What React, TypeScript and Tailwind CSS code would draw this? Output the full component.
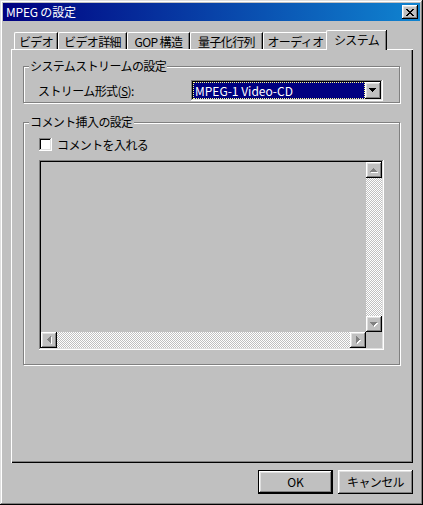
import React from "react";

const raised =
  "shadow-[inset_-1px_-1px_#000,inset_1px_1px_#fff,inset_-2px_-2px_#808080,inset_2px_2px_#dfdfdf]";
const sunken =
  "shadow-[inset_-1px_-1px_#fff,inset_1px_1px_#808080,inset_-2px_-2px_#dfdfdf,inset_2px_2px_#000]";
const checker =
  "bg-[repeating-conic-gradient(#c0c0c0_0%_25%,#ffffff_0%_50%)] bg-[length:2px_2px]";

type Dir = "up" | "down" | "left" | "right";

function tri(dir: Dir): [number, number][] {
  const pts: [number, number][] = [];
  for (let r = 0; r < 4; r++) {
    for (let c = 3 - r; c <= 3 + r; c++) {
      if (dir === "up") pts.push([c, r]);
      if (dir === "down") pts.push([c, 3 - r]);
      if (dir === "left") pts.push([r, c]);
      if (dir === "right") pts.push([3 - r, c]);
    }
  }
  return pts;
}

function Arrow({ dir, disabled }: { dir: Dir; disabled?: boolean }) {
  const horiz = dir === "up" || dir === "down";
  const w = horiz ? 7 : 4;
  const h = horiz ? 4 : 7;
  const pts = tri(dir);
  return (
    <svg width={w + 1} height={h + 1} viewBox={`0 0 ${w + 1} ${h + 1}`} shapeRendering="crispEdges">
      {disabled &&
        pts.map(([x, y], i) => (
          <rect key={"w" + i} x={x + 1} y={y + 1} width={1} height={1} fill="#ffffff" />
        ))}
      {pts.map(([x, y], i) => (
        <rect key={"b" + i} x={x} y={y} width={1} height={1} fill={disabled ? "#808080" : "#000000"} />
      ))}
    </svg>
  );
}

function ScrollBtn({ dir }: { dir: Dir }) {
  return (
    <div className={`w-[16px] h-[16px] shrink-0 bg-[#c0c0c0] flex items-center justify-center ${raised}`}>
      <Arrow dir={dir} disabled />
    </div>
  );
}

function Tab({ label, w, selected }: { label: string; w: string; selected?: boolean }) {
  if (selected) {
    return (
      <div
        className={`${w} h-[20px] -ml-[2px] bg-[#c0c0c0] border-l border-t border-white rounded-tl-[2px] relative z-10 shadow-[inset_-1px_0_#808080,1px_0_#000] flex items-start justify-center pt-[3px] leading-[12px]`}
      >
        {label}
      </div>
    );
  }
  return (
    <div
      className={`${w} h-[17px] mb-[1px] bg-[#c0c0c0] border-l border-t border-white rounded-tl-[2px] shadow-[inset_-1px_0_#808080,inset_-2px_0_#c0c0c0] border-r border-r-black flex items-start justify-center pt-[3px] leading-[12px] whitespace-nowrap`}
    >
      {label}
    </div>
  );
}

function Group({ title, className, children }: { title: string; className?: string; children: React.ReactNode }) {
  return (
    <div
      className={`relative border border-[#808080] shadow-[inset_1px_1px_#fff,1px_1px_#fff] ${className ?? ""}`}
    >
      <span className="absolute left-[5px] -top-[7px] px-[1px] bg-[#c0c0c0] leading-[12px]">{title}</span>
      {children}
    </div>
  );
}

export default function App() {
  return (
    <div
      className={`w-[423px] h-[505px] bg-[#c0c0c0] p-[3px] flex flex-col text-[12px] tracking-[-0.6px] text-black font-['Noto_Sans_CJK_JP','Noto_Sans',sans-serif] shadow-[inset_-1px_-1px_#000,inset_1px_1px_#dfdfdf,inset_-2px_-2px_#808080,inset_2px_2px_#fff]`}
    >
      {/* Title bar */}
      <div className="h-[18px] shrink-0 flex items-center justify-between bg-[linear-gradient(to_right,#000080,#1084d0)] pl-[3px] pr-[2px]">
        <span className="text-white leading-[12px] tracking-[-0.2px]">MPEG の設定</span>
        <div className={`w-[16px] h-[14px] bg-[#c0c0c0] flex items-center justify-center ${raised}`}>
          <svg width="8" height="7" viewBox="0 0 8 7" shapeRendering="crispEdges">
            {[0, 1, 2, 3, 4, 5, 6].map((i) => (
              <React.Fragment key={i}>
                <rect x={i} y={i} width={2} height={1} fill="#000" />
                <rect x={6 - i} y={i} width={2} height={1} fill="#000" />
              </React.Fragment>
            ))}
          </svg>
        </div>
      </div>

      {/* Body */}
      <div className="flex-1 flex flex-col pl-[8px] pr-[7px] pt-[9px]">
        {/* Tabs */}
        <div className="h-[20px] -mb-[1px] flex items-end pl-[3px] relative z-10">
          <Tab label="ビデオ" w="w-[44px]" />
          <Tab label="ビデオ詳細" w="w-[69px]" />
          <Tab label="GOP 構造" w="w-[63px]" />
          <Tab label="量子化行列" w="w-[73px]" />
          <Tab label="オーディオ" w="w-[65px]" />
          <Tab label="システム" w="w-[60px]" selected />
        </div>

        {/* Panel */}
        <div className="h-[414px] shrink-0 pt-[17px] pl-[12px] pr-[13px] shadow-[inset_1px_1px_#fff,inset_-1px_-1px_#000,inset_-2px_-2px_#808080]">
          <Group title="システムストリームの設定" className="pt-[13px] pb-[1px] pl-[14px] pr-[16px]">
            <div className="flex items-center justify-between">
              <span className="leading-[12px]">
                ストリーム形式(<span className="underline">S</span>):
              </span>
              <div className={`w-[192px] h-[21px] bg-white p-[2px] flex ${sunken}`}>
                <div className="flex-1 bg-[#000080] border border-dotted border-[#ffff90] flex items-center pl-[1px] text-white leading-[12px] tracking-normal">
                  MPEG-1 Video-CD
                </div>
                <div className={`w-[16px] h-[17px] bg-[#c0c0c0] flex items-center justify-center ${raised}`}>
                  <Arrow dir="down" />
                </div>
              </div>
            </div>
          </Group>

          <Group title="コメント挿入の設定" className="mt-[19px] pt-[15px] pb-[14px] pl-[15px]">
            <div className="flex items-center h-[13px]">
              <div className={`w-[13px] h-[13px] bg-white ${sunken}`} />
              <span className="ml-[5px] leading-[12px]">コメントを入れる</span>
            </div>
            <div className={`mt-[9px] w-[345px] h-[190px] p-[2px] flex flex-col bg-[#c0c0c0] ${sunken}`}>
              <div className="flex-1 flex">
                <div className="flex-1" />
                <div className="w-[16px] flex flex-col">
                  <ScrollBtn dir="up" />
                  <div className={`flex-1 ${checker}`} />
                  <ScrollBtn dir="down" />
                </div>
              </div>
              <div className="h-[16px] flex">
                <ScrollBtn dir="left" />
                <div className={`flex-1 ${checker}`} />
                <ScrollBtn dir="right" />
                <div className="w-[16px] h-[16px] bg-[#c0c0c0]" />
              </div>
            </div>
          </Group>
        </div>

        {/* Buttons */}
        <div className="mt-[7px] flex justify-end gap-[5px]">
          <div className="w-[75px] h-[24px] border border-black">
            <div className={`w-full h-full bg-[#c0c0c0] flex items-center justify-center leading-[12px] tracking-normal ${raised}`}>
              OK
            </div>
          </div>
          <div className={`w-[75px] h-[24px] bg-[#c0c0c0] flex items-center justify-center leading-[12px] ${raised}`}>
            キャンセル
          </div>
        </div>
      </div>
    </div>
  );
}
